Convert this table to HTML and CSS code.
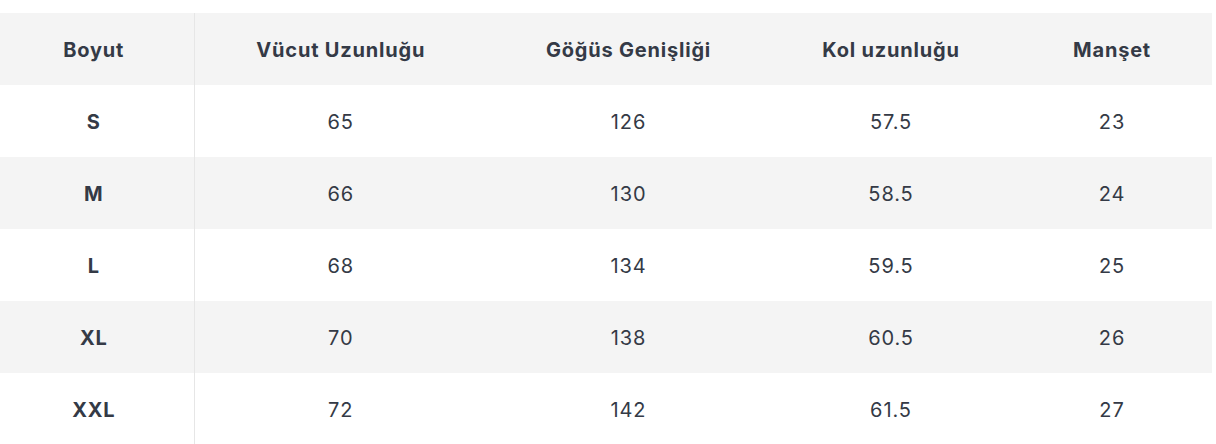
FILE: index.html
```html
<!DOCTYPE html>
<html lang="tr">
<head>
<meta charset="utf-8">
<link rel="stylesheet" href="styles.css">
</head>
<body>
<div class="wrap">
<table class="size-table">
  <colgroup>
    <col class="c1"><col class="c2"><col class="c3"><col class="c4"><col class="c5">
  </colgroup>
  <thead>
    <tr><th class="first">Boyut</th><th>Vücut Uzunluğu</th><th>Göğüs Genişliği</th><th>Kol uzunluğu</th><th>Manşet</th></tr>
  </thead>
  <tbody>
    <tr><td class="first">S</td><td>65</td><td>126</td><td>57.5</td><td>23</td></tr>
    <tr class="alt"><td class="first">M</td><td>66</td><td>130</td><td>58.5</td><td>24</td></tr>
    <tr><td class="first">L</td><td>68</td><td>134</td><td>59.5</td><td>25</td></tr>
    <tr class="alt"><td class="first">XL</td><td>70</td><td>138</td><td>60.5</td><td>26</td></tr>
    <tr><td class="first">XXL</td><td>72</td><td>142</td><td>61.5</td><td>27</td></tr>
  </tbody>
</table>
</div>
</body>
</html>
```

FILE: styles.css
```css
html, body {
  margin: 0;
  padding: 0;
  background: #ffffff;
}
.wrap {
  padding-top: 13px;
}
.size-table {
  width: 1212px;
  border-collapse: collapse;
  table-layout: fixed;
  font-family: Inter, "Noto Sans", "Liberation Sans", sans-serif;
  font-size: 20px;
  color: #343a46;
}
.c1 { width: 194px; }
.c2 { width: 293px; }
.c3 { width: 283px; }
.c4 { width: 242px; }
.c5 { width: 200px; }
.size-table th,
.size-table td {
  height: 70px;
  padding: 2px 0 0 0;
  text-align: center;
  vertical-align: middle;
}
.size-table th {
  font-weight: 700;
  letter-spacing: 0.8px;
  background: #f4f4f4;
}
.size-table td {
  font-weight: 400;
  letter-spacing: 0.9px;
}
.size-table .first {
  font-weight: 700;
  letter-spacing: 0.8px;
  border-right: 1px solid #e6e6e6;
  padding-right: 6px;
}
.size-table tr.alt td {
  background: #f4f4f4;
}
```
